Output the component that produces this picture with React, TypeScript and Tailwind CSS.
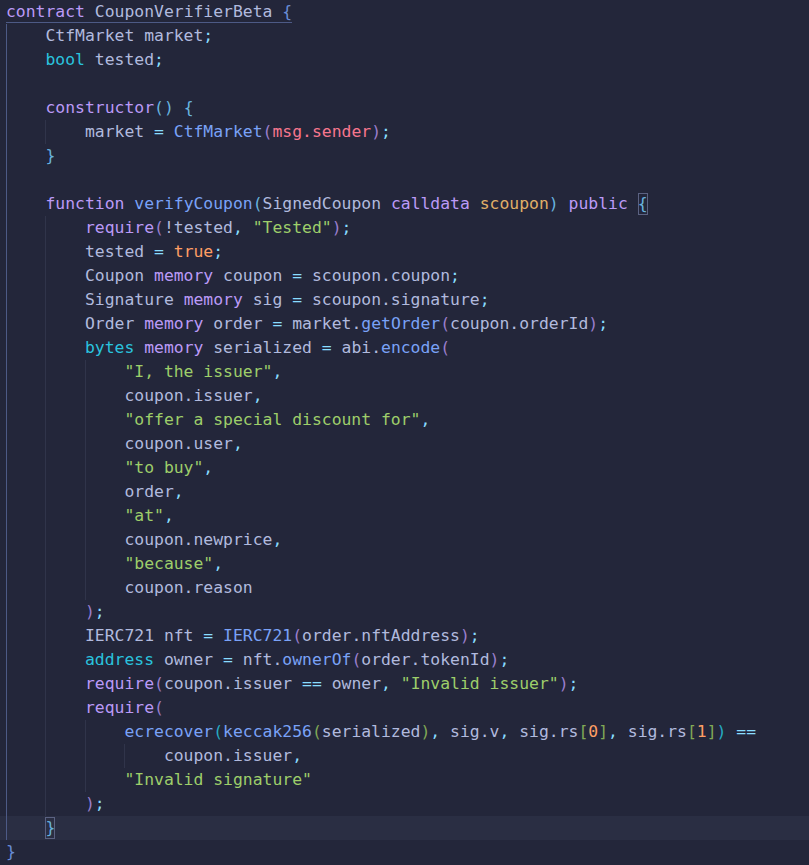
import React from "react";

type Tok = [string, string];

const C: Record<string, string> = {
  p: "text-[#b1bade]",
  k: "text-[#bb9af7]",
  t: "text-[#2ac3de]",
  f: "text-[#7aa2f7]",
  s: "text-[#9ece6a]",
  n: "text-[#ff9e64]",
  a: "text-[#e0af68]",
  r: "text-[#f7768e]",
  o: "text-[#89ddff]",
  b0: "text-[#698cd6]",
  b1: "text-[#68b3de]",
  b2: "text-[#9a7ecc]",
  b3: "text-[#25aac2]",
  b4: "text-[#80a856]",
  box: "text-[#68b3de] outline outline-1 outline-[#5b6282] -outline-offset-1",
};

// [guides, tokens]
const lines: [number, Tok[]][] = [
  [0, [["contract", "k"], [" CouponVerifierBeta ", "p"], ["{", "b0"]]],
  [1, [["CtfMarket market", "p"], [";", "o"]]],
  [1, [["bool", "t"], [" tested", "p"], [";", "o"]]],
  [1, []],
  [1, [["constructor", "k"], ["()", "b1"], [" ", "p"], ["{", "b1"]]],
  [2, [["market ", "p"], ["=", "o"], [" ", "p"], ["CtfMarket", "f"], ["(", "b2"], ["msg.sender", "r"], [")", "b2"], [";", "o"]]],
  [1, [["}", "b1"]]],
  [1, []],
  [1, [["function", "k"], [" ", "p"], ["verifyCoupon", "f"], ["(", "b1"], ["SignedCoupon ", "p"], ["calldata", "k"], [" ", "p"], ["scoupon", "a"], [")", "b1"], [" ", "p"], ["public", "k"], [" ", "p"], ["{", "box"]]],
  [2, [["require", "k"], ["(", "b2"], ["!tested", "p"], [",", "o"], [" ", "p"], ['"Tested"', "s"], [")", "b2"], [";", "o"]]],
  [2, [["tested ", "p"], ["=", "o"], [" ", "p"], ["true", "n"], [";", "o"]]],
  [2, [["Coupon ", "p"], ["memory", "k"], [" coupon ", "p"], ["=", "o"], [" scoupon.coupon", "p"], [";", "o"]]],
  [2, [["Signature ", "p"], ["memory", "k"], [" sig ", "p"], ["=", "o"], [" scoupon.signature", "p"], [";", "o"]]],
  [2, [["Order ", "p"], ["memory", "k"], [" order ", "p"], ["=", "o"], [" market.", "p"], ["getOrder", "f"], ["(", "b2"], ["coupon.orderId", "p"], [")", "b2"], [";", "o"]]],
  [2, [["bytes", "t"], [" ", "p"], ["memory", "k"], [" serialized ", "p"], ["=", "o"], [" abi.", "p"], ["encode", "f"], ["(", "b2"]]],
  [3, [['"I, the issuer"', "s"], [",", "o"]]],
  [3, [["coupon.issuer", "p"], [",", "o"]]],
  [3, [['"offer a special discount for"', "s"], [",", "o"]]],
  [3, [["coupon.user", "p"], [",", "o"]]],
  [3, [['"to buy"', "s"], [",", "o"]]],
  [3, [["order", "p"], [",", "o"]]],
  [3, [['"at"', "s"], [",", "o"]]],
  [3, [["coupon.newprice", "p"], [",", "o"]]],
  [3, [['"because"', "s"], [",", "o"]]],
  [3, [["coupon.reason", "p"]]],
  [2, [[")", "b2"], [";", "o"]]],
  [2, [["IERC721 nft ", "p"], ["=", "o"], [" ", "p"], ["IERC721", "f"], ["(", "b2"], ["order.nftAddress", "p"], [")", "b2"], [";", "o"]]],
  [2, [["address", "t"], [" owner ", "p"], ["=", "o"], [" nft.", "p"], ["ownerOf", "f"], ["(", "b2"], ["order.tokenId", "p"], [")", "b2"], [";", "o"]]],
  [2, [["require", "k"], ["(", "b2"], ["coupon.issuer ", "p"], ["==", "o"], [" owner", "p"], [",", "o"], [" ", "p"], ['"Invalid issuer"', "s"], [")", "b2"], [";", "o"]]],
  [2, [["require", "k"], ["(", "b2"]]],
  [3, [["ecrecover", "f"], ["(", "b3"], ["keccak256", "f"], ["(", "b4"], ["serialized", "p"], [")", "b4"], [",", "o"], [" sig.v", "p"], [",", "o"], [" sig.rs", "p"], ["[", "b4"], ["0", "n"], ["]", "b4"], [",", "o"], [" sig.rs", "p"], ["[", "b4"], ["1", "n"], ["]", "b4"], [")", "b3"], [" ", "p"], ["==", "o"]]],
  [4, [["coupon.issuer", "p"], [",", "o"]]],
  [3, [['"Invalid signature"', "s"]]],
  [2, [[")", "b2"], [";", "o"]]],
  [1, [["}", "box"]]],
  [0, [["}", "b0"]]],
];

const Guide = ({ active }: { active: boolean }) => (
  <span
    className={`inline-block h-full w-[4ch] shrink-0 border-l ${
      active ? "border-[#4d5a86]" : "border-[#30344a]"
    }`}
  />
);

export default function App() {
  return (
    <div
      className="h-[865px] w-full overflow-hidden bg-[#23263a] pl-[6px] text-[16.4px] leading-[24px] whitespace-pre"
      style={{ fontFamily: '"DejaVu Sans Mono", monospace' }}
    >
      {lines.map(([g, toks], i) => (
        <div
          key={i}
          className={`-ml-[6px] flex h-[24px] pl-[6px] ${i === 34 ? "bg-[#2a2e43]" : ""}`}
        >
          {Array.from({ length: g }).map((_, j) => (
            <Guide key={j} active={j === 0} />
          ))}
          {i === 0 ? (
            <span className="flex h-[23px] border-b border-[#4d5a86]">
              {toks.map(([t, c], j) => (
                <span key={j} className={C[c]}>
                  {t}
                </span>
              ))}
            </span>
          ) : (
            toks.map(([t, c], j) => (
              <span key={j} className={`${C[c]} ${c === "box" ? "h-[22px] leading-[22px] self-center" : ""}`}>
                {t}
              </span>
            ))
          )}
        </div>
      ))}
    </div>
  );
}
